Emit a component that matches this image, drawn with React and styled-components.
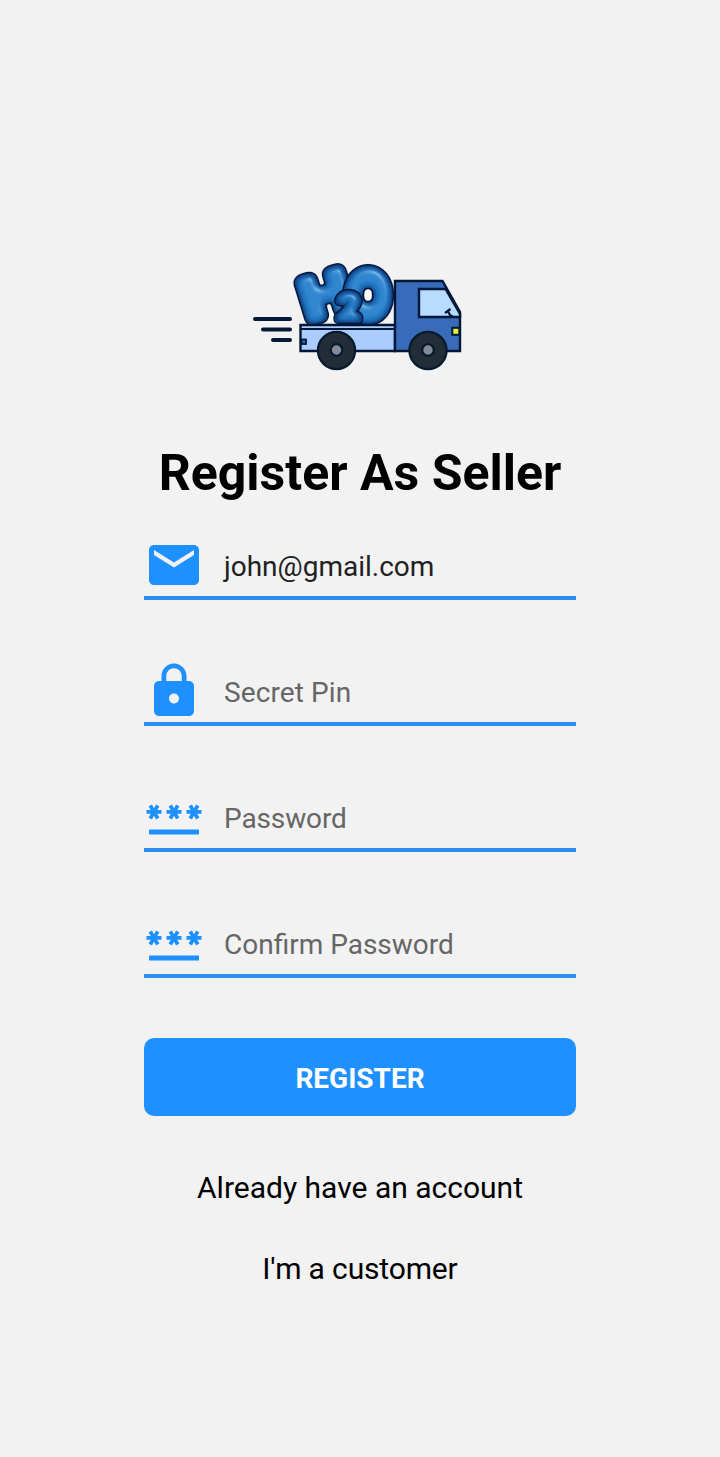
import React from 'react';
import styled, { createGlobalStyle } from 'styled-components';

const GlobalStyle = createGlobalStyle`
  * { box-sizing: border-box; }
  body {
    margin: 0;
    background: #f2f2f2;
    font-family: Roboto, "Liberation Sans", sans-serif;
  }
`;

const Screen = styled.main`
  min-height: 1457px;
  padding-top: 255px;
  display: flex;
  flex-direction: column;
  align-items: center;
  background: #f2f2f2;
`;

const Logo = styled.svg`
  display: block;
  width: 230px;
  height: 125px;
`;

const Title = styled.h1`
  margin: 63px 0 0;
  font-size: 50px;
  line-height: 60px;
  font-weight: 700;
  color: #000;
  white-space: nowrap;
`;

const Form = styled.form`
  width: 432px;
  margin-top: 32px;
  display: flex;
  flex-direction: column;
`;

const Field = styled.label`
  display: flex;
  align-items: flex-start;
  height: 65px;
  margin-bottom: 61px;
  border-bottom: 4px solid #2b8ff2;
`;

const FieldIcon = styled.svg`
  width: 60px;
  height: 60px;
  flex: none;
  fill: #1e90ff;
`;

const FieldText = styled.span`
  margin: 15px 0 0 20px;
  font-size: 28px;
  line-height: 34px;
  letter-spacing: ${(p) => p.$tracking || '0'};
  color: ${(p) => (p.$filled ? '#212121' : '#666')};
`;

const RegisterButton = styled.button`
  height: 78px;
  margin-top: -1px;
  padding: 4px 0 0;
  border: 0;
  border-radius: 10px;
  background: #1e90ff;
  color: #fff;
  font: 700 28px/34px Roboto, "Liberation Sans", sans-serif;
`;

const Links = styled.nav`
  margin-top: 54px;
  display: flex;
  flex-direction: column;
  align-items: center;
  gap: 45px;
`;

const TextLink = styled.a`
  font-size: 30px;
  line-height: 36px;
  letter-spacing: ${(p) => p.$tracking || '0'};
  color: #000;
`;

const BalloonText = styled.text`
  font-family: Lato, Roboto, sans-serif;
  font-weight: 400;
  text-anchor: middle;
  fill: #114689;
  stroke: #114689;
  stroke-linejoin: round;
  stroke-linecap: round;
`;

const icons = {
  mail: 'M20 4H4c-1.1 0-1.99.9-1.99 2L2 18c0 1.1.9 2 2 2h16c1.1 0 2-.9 2-2V6c0-1.1-.9-2-2-2zm0 4l-8 5-8-5V6l8 5 8-5v2z',
  lock: 'M18 8h-1V6c0-2.76-2.24-5-5-5S7 3.24 7 6v2H6c-1.1 0-2 .9-2 2v10c0 1.1.9 2 2 2h12c1.1 0 2-.9 2-2V10c0-1.1-.9-2-2-2zm-6 9c-1.1 0-2-.9-2-2s.9-2 2-2 2 .9 2 2-.9 2-2 2zm3.1-9H8.9V6c0-1.71 1.39-3.1 3.1-3.1 1.71 0 3.1 1.39 3.1 3.1v2z',
  password: 'M2 17h20v2H2v-2zm1.15-4.05L4 11.47l.85 1.48 1.3-.75-.85-1.48H7v-1.5H5.3l.85-1.47L4.85 7 4 8.47 3.15 7l-1.3.75.85 1.47H1v1.5h1.7l-.85 1.48 1.3.75zm6.7-.75l1.3.75.85-1.48.85 1.48 1.3-.75-.85-1.48H15v-1.5h-1.7l.85-1.47-1.3-.75L12 8.47 11.15 7l-1.3.75.85 1.47H9v1.5h1.7l-.85 1.48zM23 9.22h-1.7l.85-1.47-1.3-.75L20 8.47 19.15 7l-1.3.75.85 1.47H17v1.5h1.7l-.85 1.48 1.3.75.85-1.48.85 1.48 1.3-.75-.85-1.48H23v-1.5z',
};

const fields = [
  { icon: 'mail', text: 'john@gmail.com', filled: true },
  { icon: 'lock', text: 'Secret Pin', tracking: '0.1px' },
  { icon: 'password', text: 'Password', tracking: '-0.12px' },
  { icon: 'password', text: 'Confirm Password' },
];

// One inflated letter, centred on (cx, cy); the filter adds the rim and the shading.
function Balloon({ char, cx, cy, size, puff, rotate = 0, stretch = 1 }) {
  return (
    <g filter="url(#balloon)">
      <g transform={`translate(${cx} ${cy}) rotate(${rotate}) scale(${stretch} 1)`}>
        <BalloonText y={size * 0.36} fontSize={size} strokeWidth={puff}>
          {char}
        </BalloonText>
      </g>
    </g>
  );
}

function Wheel({ cx }) {
  return (
    <g stroke="#071b2e" strokeWidth="2.2">
      <circle cx={cx} cy="350.5" r="18.6" fill="#222d38" />
      <circle cx={cx} cy="350" r="5.8" fill="#858a99" />
    </g>
  );
}

function TruckLogo() {
  return (
    <Logo viewBox="245 255 230 125">
      <defs>
        <filter
          id="balloon"
          filterUnits="userSpaceOnUse"
          x="285"
          y="255"
          width="120"
          height="80"
          colorInterpolationFilters="sRGB"
        >
          <feGaussianBlur in="SourceAlpha" stdDeviation="1.6" result="spread" />
          <feComponentTransfer in="spread" result="rimShape">
            <feFuncA type="linear" slope="6" intercept="-0.4" />
          </feComponentTransfer>
          <feFlood floodColor="#04183c" />
          <feComposite in2="rimShape" operator="in" result="rim" />
          <feGaussianBlur in="SourceAlpha" stdDeviation="3" result="volume" />
          <feComponentTransfer in="volume" result="core">
            <feFuncA type="linear" slope="2.2" intercept="-1.25" />
          </feComponentTransfer>
          <feFlood floodColor="#2781cd" />
          <feComposite in2="core" operator="in" result="body" />
          <feSpecularLighting
            in="volume"
            surfaceScale="6"
            specularConstant="0.6"
            specularExponent="26"
            lightingColor="#a9dcff"
            result="light"
          >
            <feDistantLight azimuth="300" elevation="48" />
          </feSpecularLighting>
          <feComposite in="light" in2="SourceAlpha" operator="in" result="gloss" />
          <feMerge>
            <feMergeNode in="rim" />
            <feMergeNode in="SourceGraphic" />
            <feMergeNode in="body" />
            <feMergeNode in="gloss" />
          </feMerge>
        </filter>
      </defs>
      <path d="M255 319h35M263 329.5h27M273 340h17" stroke="#061a38" strokeWidth="4" strokeLinecap="round" />
      <ellipse cx="329" cy="315" rx="4" ry="7" fill="#fff" />
      <ellipse cx="367.5" cy="296" rx="7" ry="9" fill="#fff" />
      <Balloon char="H" cx={325.5} cy={294.5} size={52} puff={14} rotate={-17} stretch={1.18} />
      <Balloon char="O" cx={368} cy={295} size={59} puff={17} stretch={0.84} />
      <Balloon char="2" cx={348.500} cy={307} size={34} puff={7.5} stretch={1.14} />
      <g stroke="#031737" strokeWidth="2.4">
        <path d="M300.5 325H395v26h-94.500z" fill="#aaccff" />
        <path d="M301 329h94" strokeWidth="2" />
        <rect x="301.5" y="339.500" width="4.500" height="4.500" fill="#426caa" strokeWidth="1.800" />
        <path d="M395 281h47.500L460 312v39h-65z" fill="#386bb9" />
        <path d="M419 289h26.500l14.500 25v3h-41z" fill="#b7dcff" />
        <path d="M445 313l5.500-4M448 311.500l2 3.500 3 2" fill="none" strokeWidth="2.300" />
        <rect x="452.300" y="327.800" width="7" height="7" fill="#e4f62b" strokeWidth="2" />
      </g>
      <Wheel cx={336.5} />
      <Wheel cx={428} />
    </Logo>
  );
}

export default function App() {
  return (
    <>
      <GlobalStyle />
      <Screen>
        <TruckLogo />
        <Title>Register As Seller</Title>
        <Form>
          {fields.map((f) => (
            <Field key={f.text}>
              <FieldIcon viewBox="0 0 24 24">
                <path d={icons[f.icon]} />
              </FieldIcon>
              <FieldText $filled={f.filled} $tracking={f.tracking}>{f.text}</FieldText>
            </Field>
          ))}
          <RegisterButton type="button">REGISTER</RegisterButton>
        </Form>
        <Links>
          <TextLink>Already have an account</TextLink>
          <TextLink $tracking="-0.15px">I'm a customer</TextLink>
        </Links>
      </Screen>
    </>
  );
}
